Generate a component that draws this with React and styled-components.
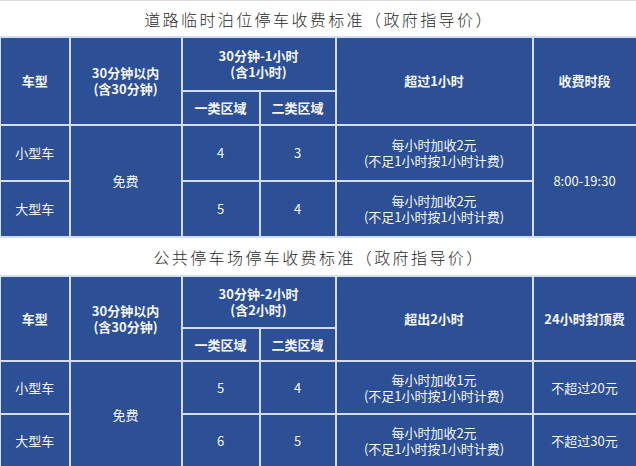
import React from "react";
import styled, { createGlobalStyle } from "styled-components";

const GlobalStyle = createGlobalStyle`
  html, body {
    margin: 0;
    padding: 0;
    background: #ffffff;
  }
  body {
    font-family: "Noto Sans CJK SC", "Noto Sans", sans-serif;
  }
`;

const Page = styled.div`
  width: 636px;
  height: 466px;
  overflow: hidden;
  border-top: 1px solid #dcdcdc;
  box-sizing: border-box;
`;

const Title = styled.div`
  height: ${(p) => p.$h}px;
  display: flex;
  align-items: center;
  justify-content: center;
  font-size: 16px;
  letter-spacing: 2.4px;
  color: #2a2a2a;
  font-weight: 300;
  padding-left: 2px;
  box-sizing: border-box;
`;

const Table = styled.table`
  width: 636px;
  table-layout: fixed;
  border-collapse: collapse;
  border-top: 2px solid #c6d4ea;
`;

const Row = styled.tr`
  height: ${(p) => p.$h}px;
`;

const Cell = styled.td`
  background: #2c4f95;
  border: 2px solid #d2ddef;
  color: #f4f6fa;
  text-align: center;
  vertical-align: middle;
  padding: 0;
  font-size: 13px;
  line-height: 16px;
  font-weight: ${(p) => (p.$head ? 700 : 400)};
  &:first-child {
    border-left-width: 1px;
  }
`;

const Line = styled.span`
  display: block;
`;

const widths = [69, 112, 78, 76, 197, 104];

function Cols() {
  return (
    <colgroup>
      {widths.map((w, i) => (
        <col key={i} style={{ width: w }} />
      ))}
    </colgroup>
  );
}

function FeeTable({ hours, over, last, rows, heights, period }) {
  return (
    <Table>
      <Cols />
      <tbody>
        <Row $h={heights[0]}>
          <Cell $head rowSpan={2}>车型</Cell>
          <Cell $head rowSpan={2}>
            <Line>30分钟以内</Line>
            <Line>(含30分钟)</Line>
          </Cell>
          <Cell $head colSpan={2}>
            <Line>30分钟-{hours}小时</Line>
            <Line>(含{hours}小时)</Line>
          </Cell>
          <Cell $head rowSpan={2}>{over}</Cell>
          <Cell $head rowSpan={2}>{last}</Cell>
        </Row>
        <Row $h={heights[1]}>
          <Cell $head>一类区域</Cell>
          <Cell $head>二类区域</Cell>
        </Row>
        {rows.map((r, i) => (
          <Row key={r.name} $h={heights[2 + i]}>
            <Cell>{r.name}</Cell>
            {i === 0 && <Cell rowSpan={2}>免费</Cell>}
            <Cell>{r.a}</Cell>
            <Cell>{r.b}</Cell>
            <Cell>
              <Line>每小时加收{r.add}元</Line>
              <Line>(不足1小时按1小时计费)</Line>
            </Cell>
            {period ? (
              i === 0 && <Cell rowSpan={2}>{period}</Cell>
            ) : (
              <Cell>{r.cap}</Cell>
            )}
          </Row>
        ))}
      </tbody>
    </Table>
  );
}

export default function App() {
  return (
    <Page>
      <GlobalStyle />
      <Title $h={35}>道路临时泊位停车收费标准（政府指导价）</Title>
      <FeeTable
        hours={1}
        over="超过1小时"
        last="收费时段"
        period="8:00-19:30"
        heights={[54, 34, 56, 56]}
        rows={[
          { name: "小型车", a: 4, b: 3, add: 2 },
          { name: "大型车", a: 5, b: 4, add: 2 },
        ]}
      />
      <Title $h={37}>公共停车场停车收费标准（政府指导价）</Title>
      <FeeTable
        hours={2}
        over="超出2小时"
        last="24小时封顶费"
        heights={[52, 33, 53, 54]}
        rows={[
          { name: "小型车", a: 5, b: 4, add: 1, cap: "不超过20元" },
          { name: "大型车", a: 6, b: 5, add: 2, cap: "不超过30元" },
        ]}
      />
    </Page>
  );
}
